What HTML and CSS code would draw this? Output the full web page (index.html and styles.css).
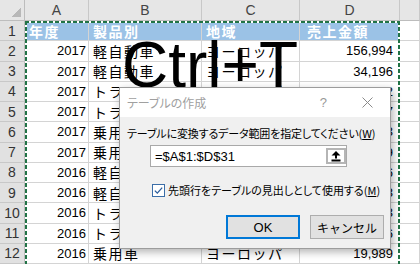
FILE: index.html
```html
<!DOCTYPE html>
<html lang="ja">
<head>
    <meta charset="UTF-8">
    <meta name="viewport" content="width=device-width, initial-scale=1.0">
    <title>テーブルの作成</title>
    <link rel="stylesheet" href="styles.css">
</head>
<body>
    <div class="sheet">
        <div class="corner"></div>
        <div class="colhead">A</div><div class="colhead">B</div><div class="colhead">C</div><div class="colhead">D</div><div class="colhead"></div>

        <div class="rowhead">1</div><div class="cell hdr">年度</div><div class="cell hdr">製品別</div><div class="cell hdr">地域</div><div class="cell hdr amount">売上金額</div><div class="cell"></div>
        <div class="rowhead">2</div><div class="cell num">2017</div><div class="cell jp">軽自動車</div><div class="cell jp">ヨーロッパ</div><div class="cell num amt">156,994</div><div class="cell"></div>
        <div class="rowhead">3</div><div class="cell num">2017</div><div class="cell jp">軽自動車</div><div class="cell jp">ヨーロッパ</div><div class="cell num amt">34,196</div><div class="cell"></div>
        <div class="rowhead">4</div><div class="cell num">2017</div><div class="cell jp">トラック</div><div class="cell jp">ヨーロッパ</div><div class="cell num amt">88,412</div><div class="cell"></div>
        <div class="rowhead">5</div><div class="cell num">2017</div><div class="cell jp">トラック</div><div class="cell jp">ヨーロッパ</div><div class="cell num amt">41,307</div><div class="cell"></div>
        <div class="rowhead">6</div><div class="cell num">2017</div><div class="cell jp">乗用車</div><div class="cell jp">ヨーロッパ</div><div class="cell num amt">120,583</div><div class="cell"></div>
        <div class="rowhead">7</div><div class="cell num">2017</div><div class="cell jp">乗用車</div><div class="cell jp">ヨーロッパ</div><div class="cell num amt">67,219</div><div class="cell"></div>
        <div class="rowhead">8</div><div class="cell num">2016</div><div class="cell jp">軽自動車</div><div class="cell jp">ヨーロッパ</div><div class="cell num amt">142,876</div><div class="cell"></div>
        <div class="rowhead">9</div><div class="cell num">2016</div><div class="cell jp">軽自動車</div><div class="cell jp">ヨーロッパ</div><div class="cell num amt">29,648</div><div class="cell"></div>
        <div class="rowhead">10</div><div class="cell num">2016</div><div class="cell jp">トラック</div><div class="cell jp">ヨーロッパ</div><div class="cell num amt">79,103</div><div class="cell"></div>
        <div class="rowhead">11</div><div class="cell num">2016</div><div class="cell jp">トラック</div><div class="cell jp">ヨーロッパ</div><div class="cell num amt">36,556</div><div class="cell"></div>
        <div class="rowhead">12</div><div class="cell num">2016</div><div class="cell jp">乗用車</div><div class="cell jp">ヨーロッパ</div><div class="cell num amt">19,989</div><div class="cell"></div>
    </div>

    <!-- copy range marker around A1:D31 -->
    <div class="marquee"></div>

    <div class="shortcut">Ctrl+T</div>

    <div class="dialog">
        <div class="titlebar">
            <span class="title">テーブルの作成</span>
            <span class="help">?</span>
            <svg class="close" width="11" height="11" viewBox="0 0 11 11"><path d="M0.5 0.5 L10.5 10.5 M10.5 0.5 L0.5 10.5" stroke="#8a8a8a" stroke-width="1"/></svg>
        </div>
        <div class="panel">
            <p class="prompt">テーブルに変換するデータ範囲を指定してください(<u>W</u>)</p>
            <div class="range">
                <span class="range-text">=$A$1:$D$31</span>
                <span class="collapse">
                    <svg width="12" height="12" viewBox="0 0 12 12"><path d="M6 1 L10.5 5.5 L7 5.5 L7 8.5 L5 8.5 L5 5.5 L1.5 5.5 Z" fill="#000"/><rect x="1.5" y="9.5" width="9" height="2" fill="#000"/></svg>
                </span>
            </div>
            <div class="check">
                <svg class="box" width="13" height="13" viewBox="0 0 13 13"><rect x="0.5" y="0.5" width="12" height="12" fill="#fff" stroke="#3b6ea8"/><path d="M2.8 6.6 L5.3 9.1 L10.2 3.6" fill="none" stroke="#2a5d9c" stroke-width="1.3"/></svg>
                <span>先頭行をテーブルの見出しとして使用する(<u>M</u>)</span>
            </div>
            <div class="buttons">
                <button class="btn default">OK</button>
                <button class="btn">キャンセル</button>
            </div>
        </div>
    </div>
</body>
</html>
```

FILE: styles.css
```css
body {
    margin: 0;
    width: 420px;
    height: 264px;
    overflow: hidden;
    position: relative;
    background: #fff;
    font-family: "Liberation Sans", "Noto Sans CJK JP", sans-serif;
}
.sheet {
    display: grid;
    grid-template-columns: 25px 64px 113px 98px 100px 20px;
    grid-template-rows: 21px;
    grid-auto-rows: 20.25px;
    height: 264px;
    overflow: hidden;
}
.corner, .colhead, .rowhead, .cell {
    box-sizing: border-box;
    border-right: 1px solid #d4d4d4;
    border-bottom: 1px solid #d4d4d4;
    display: flex;
    align-items: center;
    white-space: nowrap;
    overflow: hidden;
}
.corner {
    background: #e6e6e6 linear-gradient(135deg, transparent 58%, #b8b8b8 58%) no-repeat right 3px bottom 3px / 11px 11px;
    border-right-color: #bdbdbd;
    border-bottom-color: #bdbdbd;
}
.colhead {
    background: #e6e6e6;
    border-right-color: #c8c8c8;
    border-bottom-color: #bdbdbd;
    justify-content: center;
    font-size: 14px;
    color: #444;
}
.rowhead {
    background: #e1e1e1;
    border-right-color: #bdbdbd;
    border-bottom-color: #c8c8c8;
    justify-content: center;
    font-size: 14px;
    color: #333;
}
.cell {
    padding: 0 4px;
    font-size: 13px;
    color: #000;
}
.hdr {
    background: #9bc2e6;
    color: #fff;
    font-family: "Noto Sans CJK JP", sans-serif;
    font-weight: bold;
    font-size: 14px;
    letter-spacing: 1.5px;
}
.amount {
    padding-left: 7px;
}
.jp {
    font-family: "Noto Sans CJK JP", sans-serif;
    font-size: 14px;
    letter-spacing: 1.5px;
}
.num {
    justify-content: flex-end;
    padding-right: 2px;
}
.amt {
    padding-right: 6px;
}
.marquee {
    position: absolute;
    left: 25px;
    top: 21px;
    width: 375px;
    height: 243px;
    background:
        repeating-linear-gradient(90deg, #217346 0 4px, #fff 4px 6px) left top / 100% 2px no-repeat,
        repeating-linear-gradient(180deg, #217346 0 4px, #fff 4px 6px) left top / 2px 100% no-repeat,
        repeating-linear-gradient(180deg, #217346 0 4px, #fff 4px 6px) right top / 2px 100% no-repeat;
}
.shortcut {
    position: absolute;
    left: 122px;
    top: 33px;
    font-size: 64px;
    line-height: 64px;
    color: #000;
}
.dialog {
    position: absolute;
    left: 119px;
    top: 87px;
    width: 272px;
    height: 162px;
    box-sizing: border-box;
    border: 1px solid #9c9c9c;
    background: #f0f0f0;
    box-shadow: 2px 3px 8px rgba(0, 0, 0, 0.3);
    display: flex;
    flex-direction: column;
    font-family: "Noto Sans CJK JP", sans-serif;
    font-feature-settings: "palt";
    white-space: nowrap;
}
.titlebar {
    height: 29px;
    background: #fff;
    display: flex;
    align-items: center;
    padding: 0 0 0 7px;
}
.title {
    font-size: 12px;
    color: #a0a0a0;
    flex: 1;
}
.help {
    font-family: "Liberation Sans", sans-serif;
    font-size: 13px;
    color: #999;
    margin-right: 35px;
}
.close {
    margin-right: 17px;
}
.panel {
    flex: 1;
    padding: 0 6px 0 7px;
    display: flex;
    flex-direction: column;
}
.prompt {
    margin: 8px 0 0;
    font-size: 11px;
    letter-spacing: -0.15px;
    line-height: 16px;
    color: #000;
}
.range {
    margin: 4px 0 0 23px;
    width: 197px;
    height: 22px;
    box-sizing: border-box;
    border: 1px solid #a9a9a9;
    background: #fff;
    display: flex;
    align-items: center;
    justify-content: space-between;
}
.range-text {
    font-family: "Liberation Sans", sans-serif;
    font-size: 13px;
    padding-left: 4px;
}
.collapse {
    width: 20px;
    height: 16px;
    box-sizing: border-box;
    border: 2px solid #b5b5b5;
    background: #fff;
    display: flex;
    align-items: center;
    justify-content: center;
}
.check {
    margin: 15px 0 0 25px;
    display: flex;
    align-items: center;
    gap: 3px;
    font-size: 11px;
    color: #000;
}
.box {
    flex: none;
}
.buttons {
    margin-top: auto;
    margin-bottom: 9px;
    display: flex;
    justify-content: flex-end;
    gap: 10px;
}
.btn {
    width: 74px;
    height: 24px;
    box-sizing: border-box;
    border: 1px solid #adadad;
    background: #e1e1e1;
    font-family: "Noto Sans CJK JP", sans-serif;
    font-size: 12px;
    color: #000;
    padding: 0;
}
.btn.default {
    border: 2px solid #0078d7;
    font-family: "Liberation Sans", sans-serif;
    font-size: 13px;
}
```
